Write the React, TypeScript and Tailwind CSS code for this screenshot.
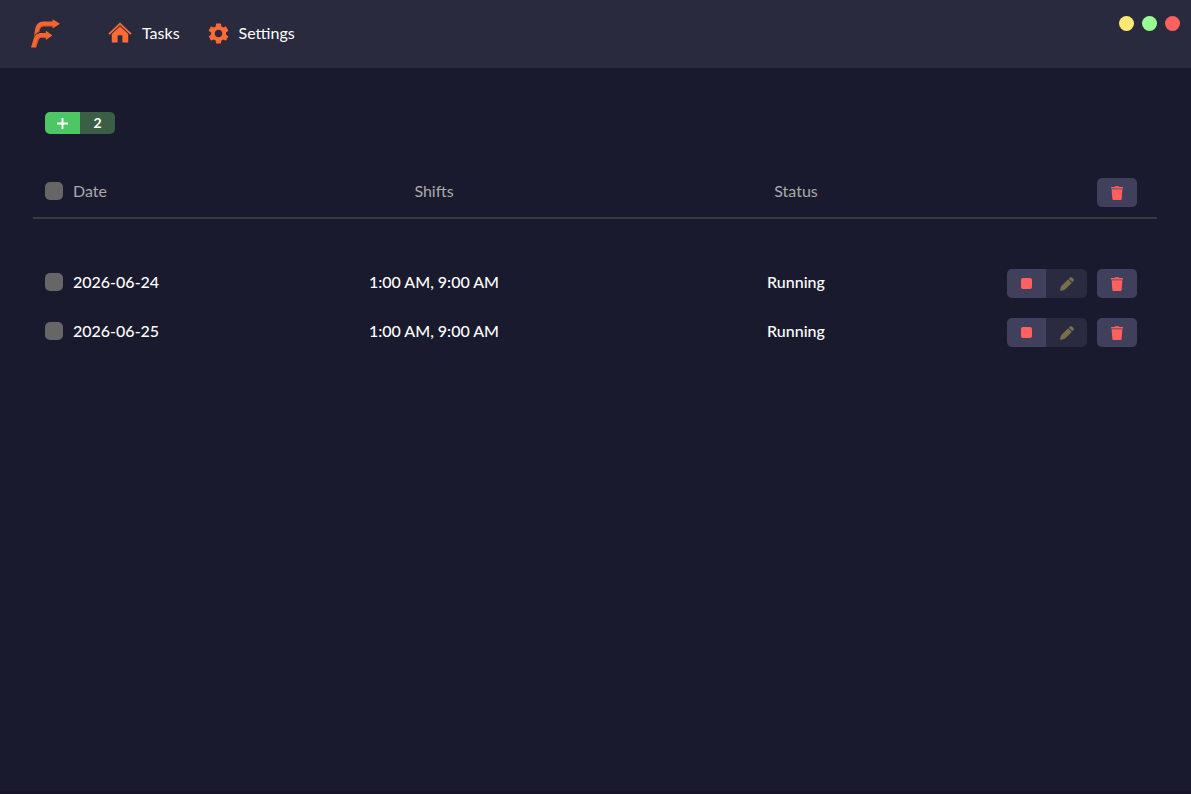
import React, { useState } from 'react';
import { MdSettings } from 'react-icons/md';

interface Task {
  id: string;
  date: string;
  shifts: string[];
  status: string;
}

const initialTasks: Task[] = [
  { id: '1', date: '2026-06-24', shifts: ['1:00 AM', '9:00 AM'], status: 'Running' },
  { id: '2', date: '2026-06-25', shifts: ['1:00 AM', '9:00 AM'], status: 'Running' },
];

const checkboxClass =
  'size-[18px] shrink-0 cursor-pointer appearance-none rounded-[5px] bg-[#666666] checked:bg-[#ff6b35]';

function Logo() {
  return (
    <svg viewBox="0 0 30 30" className="size-[30px]" aria-hidden="true">
      <path
        d="M3.8 19L5 12C6 6.5 8.5 3.6 14 3.6H22.6V1.2L30 5.8L22.6 10.4V8.2H14.5C11 8.2 9.6 10 9 14C6.5 14.8 5 16.5 3.8 19Z"
        fill="#f5652f"
      />
      <path
        d="M1 29.6L3.4 21.5C4.8 17 7 14.9 11.5 14.9H15.8V12.6L22.3 17.4L15.8 22V19.6H12C9.6 19.6 8.8 20.6 8 23.2L5.9 29.6Z"
        fill="#f5652f"
      />
      <path d="M9 13.8C9.6 9.6 11.2 7.9 14.5 7.9H22.6" fill="none" stroke="#d94f25" strokeWidth="1" />
      <path d="M5.6 29.6L7.8 22.8C8.6 20.2 9.6 19.3 12 19.3H15.8" fill="none" stroke="#d94f25" strokeWidth="1" />
      <path d="M4 18.6C5.2 16 6.8 14.6 9.2 14" fill="none" stroke="#a83c1e" strokeWidth="0.8" />
    </svg>
  );
}

function HomeIcon() {
  return (
    <svg viewBox="0 0 24 22" className="h-[22px] w-6" fill="#ff6b35" aria-hidden="true">
      <path d="M12 0.6L0.4 11.6L1.6 12.8L12 3L22.4 12.8L23.6 11.6Z" />
      <path d="M12 4.2L3.8 12V20.6H9.6V14.2Q9.6 13.2 10.6 13.2H13.4Q14.4 13.2 14.4 14.2V20.6H20.2V12Z" />
    </svg>
  );
}

function TrashIcon() {
  return (
    <svg viewBox="0 0 12 14" className="h-[14px] w-3" fill="#ff6060" aria-hidden="true">
      <path d="M0.4 0.9H3.6L4.2 0.2H7.8L8.4 0.9H11.6Q12 0.9 12 1.3V2.5H0V1.3Q0 0.9 0.4 0.9Z" />
      <path d="M0.6 3.2H11.4L10.6 12.9Q10.5 13.9 9.6 13.9H2.4Q1.5 13.9 1.4 12.9Z" />
    </svg>
  );
}

function PencilIcon() {
  return (
    <svg viewBox="0 0 14 14" className="size-[14px]" fill="#797049" aria-hidden="true">
      <path d="M8.2 2.3L11.8 5.9L5.3 12.2Q4 13.4 0.5 13.8Q0 13.8 0.1 13.3Q0.4 10.2 1.6 8.8Z" />
      <path d="M8.8 1.7L9.9 0.6Q11 -0.3 12.1 0.6L13.4 1.9Q14.3 3 13.4 4.1L12.4 5.3Z" />
    </svg>
  );
}

function DeleteButton({ label, onClick }: { label: string; onClick: () => void }) {
  return (
    <button
      type="button"
      aria-label={label}
      onClick={onClick}
      className="flex h-[29px] w-10 items-center justify-center rounded-[5px] bg-[#40405c]"
    >
      <TrashIcon />
    </button>
  );
}

export default function App() {
  const [tasks, setTasks] = useState(initialTasks);
  const [selected, setSelected] = useState<string[]>([]);

  const toggle = (id: string) => {
    setSelected(selected.includes(id) ? selected.filter((s) => s !== id) : [...selected, id]);
  };

  const allSelected = tasks.length > 0 && selected.length === tasks.length;

  return (
    <div className="flex min-h-screen flex-col border-b-[3px] border-[#161426] bg-[#1a1a2e] font-['Lato',sans-serif] text-base text-white">
      <header className="flex h-[68px] items-start justify-between bg-[#2a2a3e] pr-[11px] pl-[30px]">
        <div className="flex h-[66px] items-center">
          <Logo />
          <nav className="ml-12 flex items-center gap-[26px]">
            <a href="#tasks" className="flex items-center gap-[10px]">
              <HomeIcon />
              Tasks
            </a>
            <a href="#settings" className="flex items-center gap-2">
              <MdSettings className="size-[25px] text-[#ff6b35]" />
              Settings
            </a>
          </nav>
        </div>
        <div className="flex gap-2 pt-4">
          <button type="button" aria-label="Minimize" className="size-[15px] rounded-full bg-[#ffe874]" />
          <button type="button" aria-label="Maximize" className="size-[15px] rounded-full bg-[#98ff90]" />
          <button type="button" aria-label="Close" className="size-[15px] rounded-full bg-[#ff6060]" />
        </div>
      </header>

      <main className="flex-1 pt-11 pr-[34px] pl-[33px]">
        <div className="ml-3 flex h-[22px] w-[70px] overflow-hidden rounded-[5px]">
          <button
            type="button"
            aria-label="Add task"
            className="flex flex-1 items-center justify-center bg-[#4cc764]"
          >
            <svg viewBox="0 0 11 11" className="size-[11px]" aria-hidden="true">
              <path d="M5.5 0V11M0 5.5H11" stroke="#ffffff" strokeWidth="2" />
            </svg>
          </button>
          <span className="flex flex-1 items-center justify-center bg-[#3a5f45] text-sm font-bold">
            {tasks.length}
          </span>
        </div>

        <table className="mt-[34px] w-full table-fixed border-collapse">
          <colgroup>
            <col className="w-[220px]" />
            <col />
            <col />
            <col className="w-[180px]" />
          </colgroup>
          <thead className="text-[#aaaaaa]">
            <tr className="h-[50px] border-b-2 border-[#3a3a3a]">
              <th className="pb-1 pl-3 font-normal">
                <label className="flex items-center gap-[10px]">
                  <input
                    type="checkbox"
                    className={checkboxClass}
                    checked={allSelected}
                    onChange={() => setSelected(allSelected ? [] : tasks.map((t) => t.id))}
                  />
                  Date
                </label>
              </th>
              <th className="pb-1 font-normal">Shifts</th>
              <th className="pb-1 font-normal">Status</th>
              <th className="pr-5">
                <div className="flex justify-end">
                  <DeleteButton
                    label="Delete selected"
                    onClick={() => setTasks(tasks.filter((t) => !selected.includes(t.id)))}
                  />
                </div>
              </th>
            </tr>
          </thead>
          <tbody className="font-medium before:block before:h-10">
            {tasks.map((task) => (
              <tr key={task.id} className="h-[49px]">
                <td className="pb-1 pl-3">
                  <label className="flex items-center gap-[10px]">
                    <input
                      type="checkbox"
                      className={checkboxClass}
                      checked={selected.includes(task.id)}
                      onChange={() => toggle(task.id)}
                    />
                    {task.date}
                  </label>
                </td>
                <td className="pb-1 text-center">{task.shifts.join(', ')}</td>
                <td className="pb-1 text-center">{task.status}</td>
                <td className="pr-5">
                  <div className="flex justify-end gap-[10px]">
                    <div className="flex h-[29px] w-20 overflow-hidden rounded-[5px]">
                      <button
                        type="button"
                        aria-label="Stop"
                        className="flex w-[39px] items-center justify-center bg-[#40405c]"
                      >
                        <span className="size-[11px] rounded-xs bg-[#ff6060]" />
                      </button>
                      <button
                        type="button"
                        aria-label="Edit"
                        disabled
                        className="flex flex-1 items-center justify-center bg-[#2a2a40]"
                      >
                        <PencilIcon />
                      </button>
                    </div>
                    <DeleteButton
                      label="Delete task"
                      onClick={() => setTasks(tasks.filter((t) => t.id !== task.id))}
                    />
                  </div>
                </td>
              </tr>
            ))}
          </tbody>
        </table>
      </main>
    </div>
  );
}
